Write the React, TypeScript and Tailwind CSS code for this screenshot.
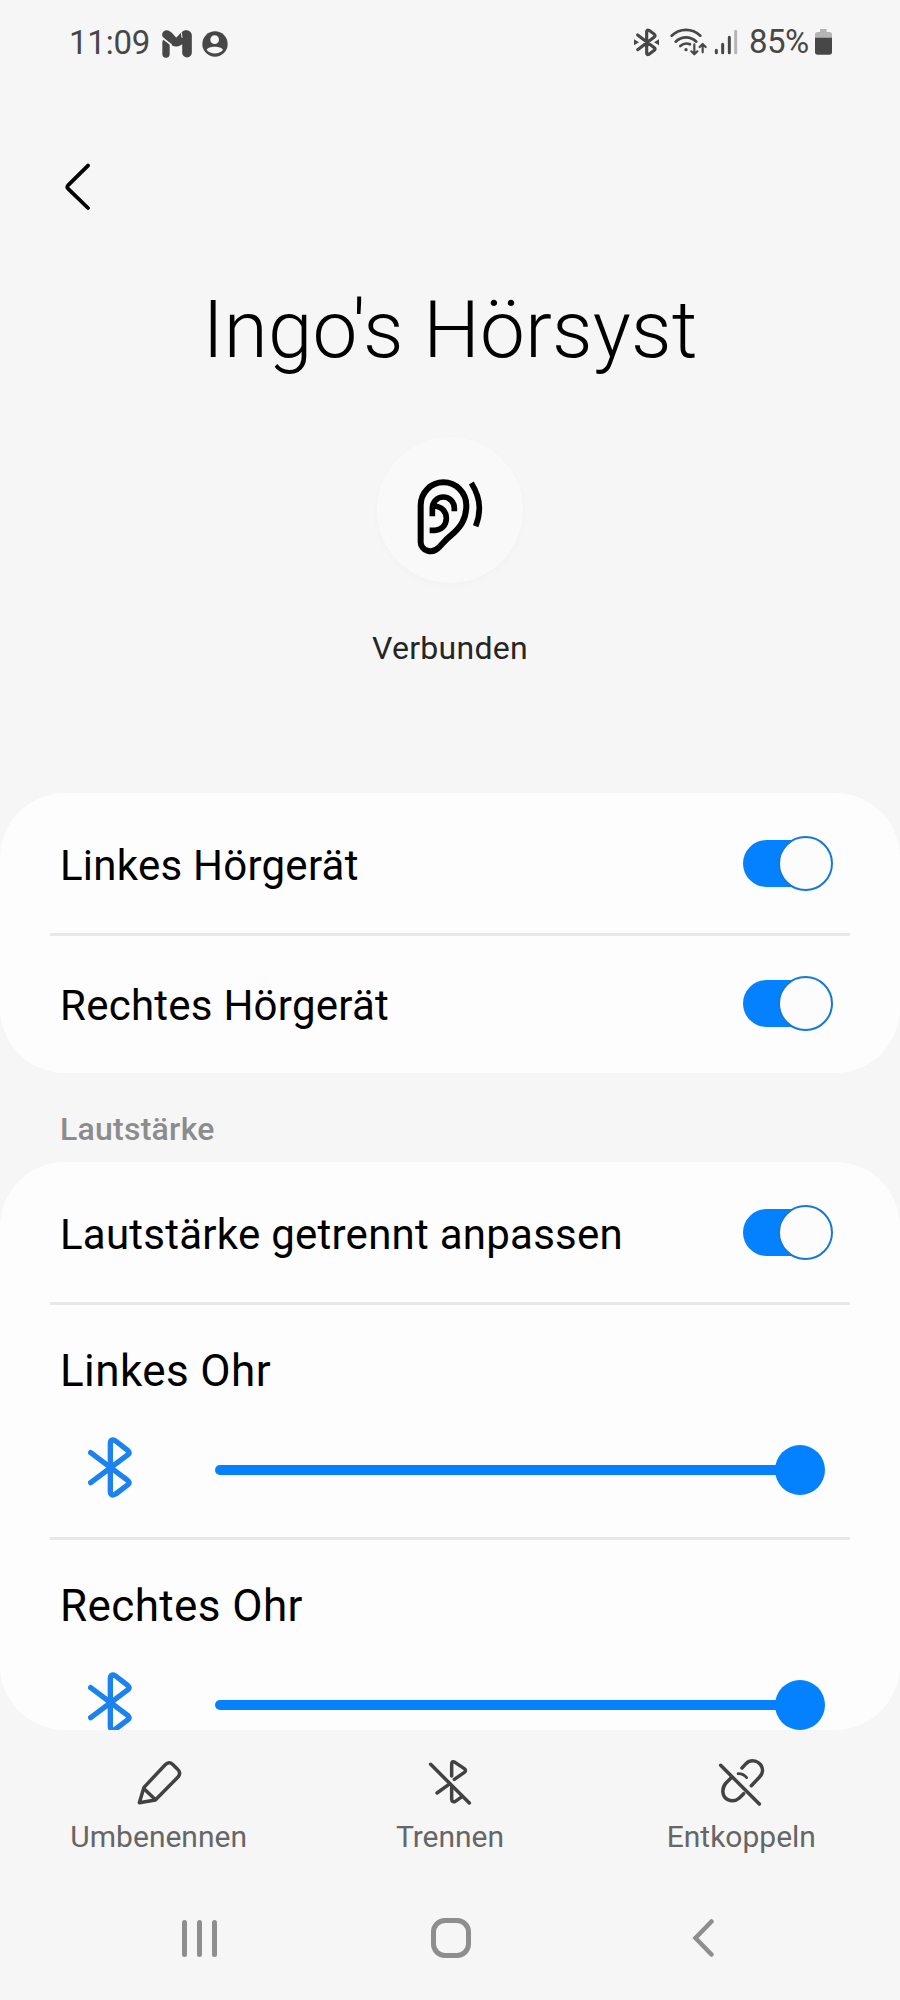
import { useState } from "react";
import type { ReactNode } from "react";
import clsx from "clsx";

const ACTIONS = [
  { label: "Umbenennen", icon: <PencilIcon /> },
  { label: "Trennen", icon: <BluetoothOffIcon /> },
  { label: "Entkoppeln", icon: <UnlinkIcon /> },
];

/* ── Icons ──────────────────────────────────────────────────────── */

function MailIcon() {
  return (
    <svg className="w-[30px] h-[28px]" viewBox="365 56 90 84" fill="none" stroke="#474747" strokeLinecap="round">
      <path d="M377 94V128" stroke="#474747" strokeWidth="22" />
      <path d="M440 72V124" strokeWidth="29" />
      <path d="M379 70C389 71 394 92 408 92C419 92 424 78 436 70" strokeWidth="27" />
      <path d="M364 78L392 100" stroke="#f6f6f6" strokeWidth="5" />
      <path d="M423 64L425 78" stroke="#f6f6f6" strokeWidth="3" />
    </svg>
  );
}

function PersonIcon() {
  return (
    <svg className="w-[26px] h-[26px]" viewBox="486 58 78 78">
      <circle cx="525" cy="97" r="38" fill="#474747" />
      <circle cx="524" cy="84" r="13" fill="#f6f6f6" />
      <path d="M500 115C504 102 544 102 549 115C538 129 511 129 500 115Z" fill="#f6f6f6" />
    </svg>
  );
}

function StatusBluetoothIcon() {
  return (
    <svg className="w-[25px] h-[29px]" viewBox="43 52 75 87" fill="none" stroke="#474747" strokeWidth="9.5" strokeLinecap="round" strokeLinejoin="round">
      <path d="M54 73L104 111Q108 115 104 119L88 131Q81 134 81 127V64Q81 56 88 59L104 71Q108 75 104 79L54 117" />
      <path d="M43 86L58 95L43 104Z M118 86L103 95L118 104Z" fill="#474747" stroke="none" />
    </svg>
  );
}

function WifiIcon() {
  return (
    <svg className="w-[37px] h-[29px]" viewBox="148 52 111 87" fill="none" stroke="#474747" strokeWidth="8" strokeLinecap="round" strokeLinejoin="round">
      <path d="M153 75C178 52 214 52 239 75" />
      <path d="M165 93C183 76 209 76 227 93" />
      <path d="M179 106C188 98 199 97 208 101" />
      <circle cx="196" cy="117" r="5" fill="#474747" stroke="none" />
      <path d="M221 101V131M212 122L221 131L230 122M246 125V101M237 109L246 100L255 109" strokeWidth="6.5" />
    </svg>
  );
}

function SignalIcon() {
  return (
    <svg className="w-[24px] h-[26px]" viewBox="280 54 72 78" fill="none" stroke="#474747" strokeWidth="9" strokeLinecap="round">
      <path d="M287 118V125M306 100V125M326 79V125" />
      <path d="M345 61V125" stroke="#b5b5b5" />
    </svg>
  );
}

function BatteryIcon() {
  return (
    <svg className="w-[17px] h-[26px]" viewBox="585 56 51 78">
      <path d="M600 56H620V65H628Q636 65 636 73V84H585V73Q585 65 593 65H600Z" fill="#b5b5b5" />
      <path d="M585 82H636V125Q636 133 628 133H593Q585 133 585 125Z" fill="#474747" />
    </svg>
  );
}

function EarIcon() {
  return (
    <svg className="w-[70px] h-[80px]" viewBox="195 170 210 240" fill="none" stroke="#000" strokeWidth="18">
      <path d="M212 365V255A68.5 69 0 0 1 349 255C349 298 330 323 302 346C288 357 279 369 267 381C246 404 212 390 212 365Z" />
      <path d="M247 288V264A33 34 0 0 1 313 264V273" strokeWidth="17" />
      <path d="M249 257C276 257 289 275 289 294C289 316 273 330 254 330H239" strokeWidth="17" />
      <path d="M364 188C380 214 388 238 388 262C388 282 384 300 377 318" strokeWidth="17" />
    </svg>
  );
}

function BluetoothIcon() {
  return (
    <svg className="w-[44px] h-[61px] shrink-0" viewBox="264 710 132 183" fill="none" stroke="#1c82ee" strokeWidth="16" strokeLinecap="round" strokeLinejoin="round">
      <path d="M272 757L384 841Q391 847 384 853L347 881Q331 890 331 872V730Q331 713 347 722L384 751Q391 757 384 763L272 847" />
    </svg>
  );
}

function PencilIcon() {
  return (
    <svg className="w-12 h-12" viewBox="254 57 144 144" fill="none" stroke="#424242" strokeWidth="10.5" strokeLinecap="round" strokeLinejoin="round">
      <path d="M281 142L344 75Q356 62 368 74L381 87Q394 98 383 111L315 180L267 188Z" />
      <path d="M281 146L314 178" />
    </svg>
  );
}

function BluetoothOffIcon() {
  return (
    <svg className="w-12 h-12" viewBox="1128 57 144 144" fill="none" stroke="#424242" strokeWidth="10.5" strokeLinecap="round" strokeLinejoin="round">
      <path d="M1142 73L1258 189" />
      <path d="M1205 108V73Q1205 61 1215 67L1243 86Q1250 91 1243 97L1213 118" />
      <path d="M1161 159L1200 131M1205 138V178Q1206 188 1216 184L1236 170" />
    </svg>
  );
}

function UnlinkIcon() {
  return (
    <svg className="w-12 h-12" viewBox="231 57 144 144" fill="none" stroke="#424242" strokeWidth="10.5" strokeLinecap="round" strokeLinejoin="round">
      <path d="M242 76L358 192" />
      <path d="M273 114L258 129C243 146 247 170 262 178C276 185 289 182 298 174L311 161" />
      <path d="M306 84L318 71C330 59 350 60 361 73C371 86 369 101 358 112L334 137" />
      <path d="M294 101Q309 100 320 113" strokeWidth="8" />
    </svg>
  );
}

/* ── Building blocks ────────────────────────────────────────────── */

function Toggle({ checked, onChange }: { checked: boolean; onChange: () => void }) {
  return (
    <button
      type="button"
      role="switch"
      aria-checked={checked}
      onClick={onChange}
      className={clsx(
        "mr-[7px] flex h-[47px] w-[90px] shrink-0 items-center",
        checked ? "justify-end" : "justify-start"
      )}
    >
      <span
        className={clsx(
          "flex h-[47px] w-[86px] items-center rounded-full",
          checked ? "mr-1 justify-end bg-[#0381fe]" : "justify-start bg-[#bdbdbd]"
        )}
      >
        <span className="-mr-1 h-[55px] w-[55px] shrink-0 rounded-full border-[2.5px] border-[#1878d6] bg-[#fcfcfc]" />
      </span>
    </button>
  );
}

function ToggleRow({ label, divided = false }: { label: string; divided?: boolean }) {
  const [checked, setChecked] = useState(true);

  return (
    <div
      className={clsx(
        "mx-[50px] flex h-[140px] items-center justify-between px-[10px]",
        divided && "border-t-[3px] border-[#e8e8e8] pb-[3px]"
      )}
    >
      <span className="pt-[5px] text-[42px] leading-[56px] tracking-[0.25px] text-black">{label}</span>
      <Toggle checked={checked} onChange={() => setChecked(!checked)} />
    </div>
  );
}

function SliderRow({ label }: { label: string }) {
  return (
    <div className="mx-[50px] h-[235px] border-t-[3px] border-[#e8e8e8] px-[10px] pt-[36px]">
      <div className="text-[44px] leading-[60px] tracking-[0.4px] text-black">{label}</div>
      <div className="mt-[39px] flex h-[60px] items-center pr-[15px] pl-[28px]">
        <div className="pb-[5px]">
          <BluetoothIcon />
        </div>
        <div className="ml-[83px] h-[10px] flex-1 rounded-l-full bg-[#0381fe]" />
        <div className="-ml-1 h-[50px] w-[50px] rounded-full bg-[#0381fe]" />
      </div>
    </div>
  );
}

function Card({ className, children }: { className?: string; children: ReactNode }) {
  return <section className={clsx("overflow-hidden rounded-[65px] bg-[#fdfdfd]", className)}>{children}</section>;
}

export default function App() {
  return (
    <main className="flex h-[2000px] w-[900px] flex-col overflow-hidden bg-[#f6f6f6] font-[Roboto,sans-serif]">
      {/* ── Status bar ─────────────────────────────────────────────── */}
      <div className="flex h-[87px] shrink-0 items-center justify-between pr-[68px] pl-[69px] text-[33px] text-[#474747]">
        <div className="flex items-center">
          <span className="w-[93px] pb-[2px] tracking-[-0.2px]">11:09</span>
          <MailIcon />
          <span className="ml-[10px]">
            <PersonIcon />
          </span>
        </div>
        <div className="flex items-center pb-[3px]">
          <StatusBluetoothIcon />
          <span className="ml-[11px]">
            <WifiIcon />
          </span>
          <span className="ml-[7px]">
            <SignalIcon />
          </span>
          <span className="ml-[11px] w-[66px] tracking-[-0.6px]">85%</span>
          <BatteryIcon />
        </div>
      </div>

      {/* ── Header ─────────────────────────────────────────────────── */}
      <header className="flex shrink-0 flex-col">
        <button type="button" aria-label="Zurück" className="flex h-[200px] w-[120px] items-center pl-[65px]">
          <svg className="h-[48px] w-[26px]" viewBox="0 0 26 48" fill="none" stroke="#000" strokeWidth="3.8" strokeLinecap="round" strokeLinejoin="round">
            <path d="M23 2.6L3 22.4Q1.6 24 3 25.6L23 45" />
          </svg>
        </button>
        <h1 className="h-[85px] pt-px text-center text-[80px] leading-[84px] font-light tracking-[0.15px] text-black">Ingo's Hörsyst</h1>
        <div className="mx-auto mt-[65px] flex h-[146px] w-[146px] items-center justify-center rounded-full bg-[#f9f9f9] pt-[13px] shadow-[0_3px_8px_rgba(0,0,0,0.02)]">
          <EarIcon />
        </div>
        <p className="mt-[41px] mb-[121px] text-center text-[32px] leading-[48px] tracking-[0.3px] text-[#252525]">Verbunden</p>
      </header>

      <Card className="h-[280px] shrink-0">
        <ToggleRow label="Linkes Hörgerät" />
        <ToggleRow label="Rechtes Hörgerät" divided />
      </Card>

      <h2 className="h-[89px] shrink-0 pt-[32px] pl-[60px] text-[32px] leading-[48px] font-medium tracking-[0.25px] text-[#8c8c8c]">Lautstärke</h2>

      <Card className="h-[568px] shrink-0">
        <ToggleRow label="Lautstärke getrennt anpassen" />
        <SliderRow label="Linkes Ohr" />
        <SliderRow label="Rechtes Ohr" />
      </Card>

      {/* ── Actions ────────────────────────────────────────────────── */}
      <div className="grid h-[146px] shrink-0 grid-cols-3 px-[13px] pt-[29px]">
        {ACTIONS.map((action) => (
          <button key={action.label} type="button" className="flex flex-col items-center">
            {action.icon}
            <span className="mt-[10px] text-[30px] leading-[40px] text-[#666]">{action.label}</span>
          </button>
        ))}
      </div>

      {/* ── System navigation ──────────────────────────────────────── */}
      <nav className="grid h-[124px] shrink-0 grid-cols-3 items-center justify-items-center pr-[71px] pl-[73px]">
        <div className="flex h-[37px] gap-[10px]">
          <span className="w-[5px] rounded-full bg-[#8e8e8e]" />
          <span className="w-[5px] rounded-full bg-[#8e8e8e]" />
          <span className="w-[5px] rounded-full bg-[#8e8e8e]" />
        </div>
        <div className="h-[40px] w-[40px] rounded-[14px] border-[5px] border-[#8e8e8e]" />
        <svg className="h-[38px] w-[22px]" viewBox="0 0 22 38" fill="none" stroke="#8e8e8e" strokeWidth="4.5" strokeLinecap="round">
          <path d="M19.5 2.5L3.5 19L19.5 35.5" />
        </svg>
      </nav>
    </main>
  );
}
